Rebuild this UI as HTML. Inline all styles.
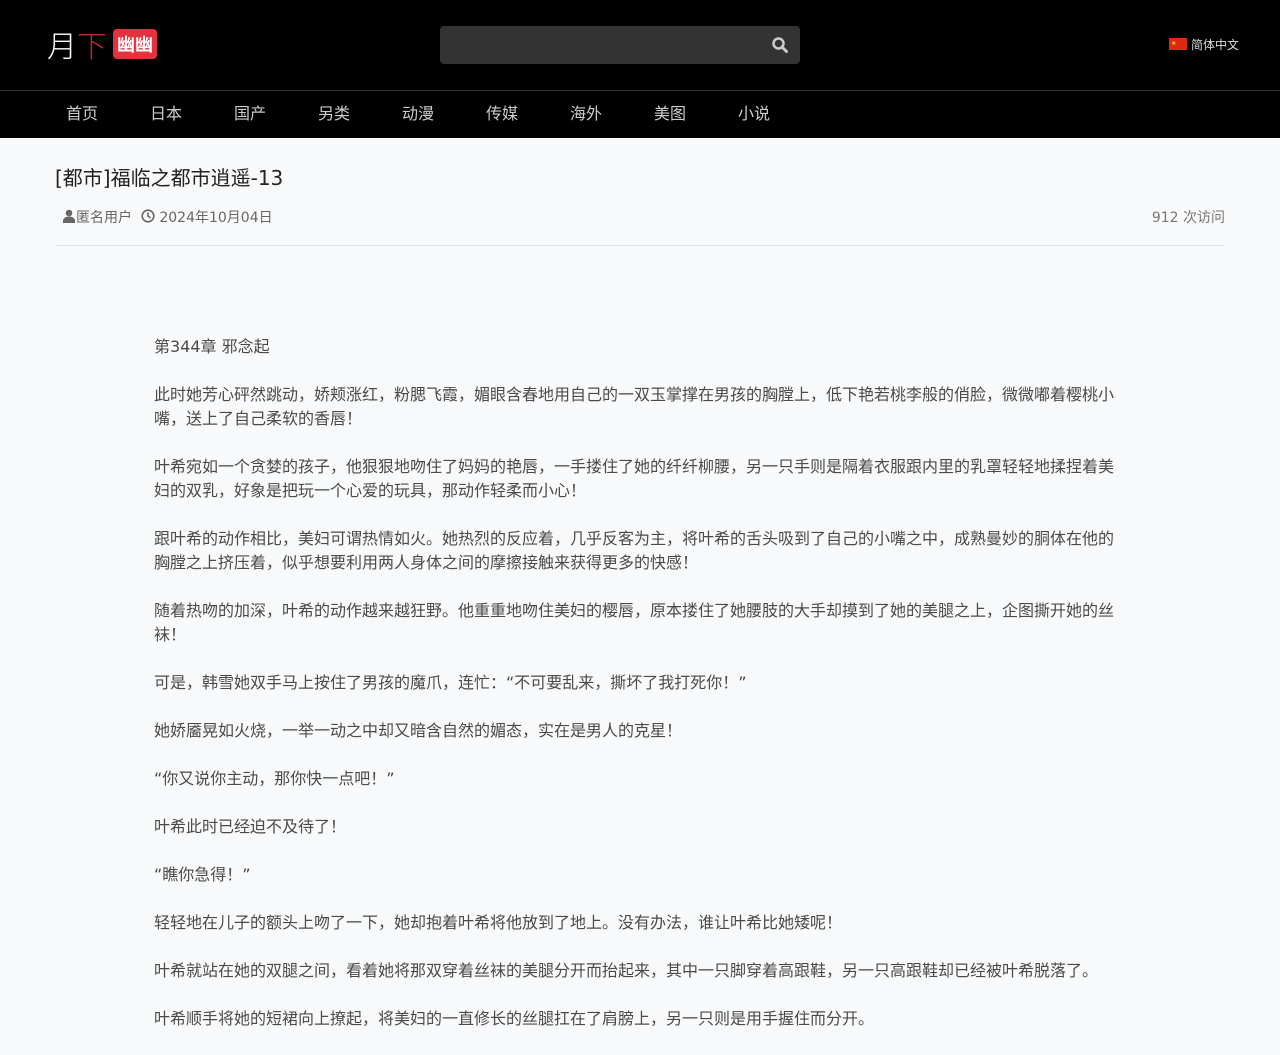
<!DOCTYPE html>
<html><head><meta charset="utf-8">
<style>
*{margin:0;padding:0;box-sizing:border-box}
html,body{background:#f8f9fa;font-family:"DejaVu Sans","Liberation Sans","WenQuanYi Zen Hei",sans-serif;width:1280px;height:1024px;overflow:hidden}
.top{background:#000;height:91px;border-bottom:1px solid #333;position:relative}
.logo{position:absolute;left:47px;top:24px;font-family:"Noto Sans CJK SC",sans-serif;font-size:30px;line-height:40px;color:#fff;font-weight:300}
.logo .r{color:#c0262d}
.logo .b{display:inline-block;background:#e5323e;color:#fff;font-size:18px;font-weight:bold;border-radius:4px;width:44px;height:30px;line-height:30px;text-align:center;vertical-align:6px;margin-left:6px}
.search{position:absolute;left:440px;top:26px;width:360px;height:38px;background:#333;border-radius:4px}
.search svg{position:absolute;right:11px;top:10px}
.lang{position:absolute;left:1169px;top:38px;font-size:12px;color:#ddd;font-family:"WenQuanYi Zen Hei",sans-serif;line-height:14px}
.flag{display:inline-block;width:18px;height:12px;background:#de2910;vertical-align:-1px;margin-right:4px;position:relative}
.flag:after{content:"★";position:absolute;left:2px;top:-1px;font-size:6px;color:#ffde00}
nav{background:#000;height:47px}
nav a{position:absolute;top:105px;font-size:16px;color:#ccc;font-family:"WenQuanYi Zen Hei",sans-serif;line-height:20px;text-decoration:none}
h1{font-size:20px;font-weight:normal;color:#222;position:absolute;left:55px;top:164px;line-height:28px}
.meta{position:absolute;left:62px;top:209px;font-size:14px;color:#666;line-height:18px}
.views{position:absolute;right:55px;top:209px;font-size:14px;color:#777;line-height:18px}
.hr{position:absolute;left:55px;right:55px;top:245px;border-top:1px solid #e2e3e5}
.content{position:absolute;left:154px;top:335px;width:966px;font-size:16px;line-height:24px;color:#4a4a4a;font-family:"DejaVu Sans","WenQuanYi Zen Hei",sans-serif}
.content p{margin-bottom:24px}
</style></head><body>
<div class="top">
<div class="logo">月<span class="r">下</span><span class="b">幽幽</span></div>
<div class="search"><svg width="18" height="18" viewBox="0 0 18 18"><circle cx="7.5" cy="7.5" r="5" fill="none" stroke="#ccc" stroke-width="2.5"/><line x1="11" y1="11" x2="15.5" y2="15.5" stroke="#ccc" stroke-width="3" stroke-linecap="round"/></svg></div>
<div class="lang"><span class="flag"></span>简体中文</div>
</div>
<nav>
<a style="left:66px">首页</a><a style="left:150px">日本</a><a style="left:234px">国产</a><a style="left:318px">另类</a><a style="left:402px">动漫</a><a style="left:486px">传媒</a><a style="left:570px">海外</a><a style="left:654px">美图</a><a style="left:738px">小说</a>
</nav>
<h1>[都市]福临之都市逍遥-13</h1>
<div class="meta"><svg width="14" height="14" viewBox="0 0 14 14" style="vertical-align:-1px"><circle cx="7" cy="4" r="3.3" fill="#666"/><path d="M1 14v-2c0-3 3-4.5 6-4.5s6 1.5 6 4.5v2z" fill="#666"/></svg>匿名用户 &nbsp;<svg width="14" height="14" viewBox="0 0 14 14" style="vertical-align:-1px"><circle cx="7" cy="7" r="5.8" fill="none" stroke="#666" stroke-width="1.6"/><path d="M7 3.5V7l2.5 2" fill="none" stroke="#666" stroke-width="1.6"/></svg> 2024年10月04日</div>
<div class="views">912 次访问</div>
<div class="hr"></div>
<div class="content">
<p>第344章 邪念起</p>
<p>此时她芳心砰然跳动，娇颊涨红，粉腮飞霞，媚眼含春地用自己的一双玉掌撑在男孩的胸膛上，低下艳若桃李般的俏脸，微微嘟着樱桃小嘴，送上了自己柔软的香唇！</p>
<p>叶希宛如一个贪婪的孩子，他狠狠地吻住了妈妈的艳唇，一手搂住了她的纤纤柳腰，另一只手则是隔着衣服跟内里的乳罩轻轻地揉捏着美妇的双乳，好象是把玩一个心爱的玩具，那动作轻柔而小心！</p>
<p>跟叶希的动作相比，美妇可谓热情如火。她热烈的反应着，几乎反客为主，将叶希的舌头吸到了自己的小嘴之中，成熟曼妙的胴体在他的胸膛之上挤压着，似乎想要利用两人身体之间的摩擦接触来获得更多的快感！</p>
<p>随着热吻的加深，叶希的动作越来越狂野。他重重地吻住美妇的樱唇，原本搂住了她腰肢的大手却摸到了她的美腿之上，企图撕开她的丝袜！</p>
<p>可是，韩雪她双手马上按住了男孩的魔爪，连忙：“不可要乱来，撕坏了我打死你！”</p>
<p>她娇靥晃如火烧，一举一动之中却又暗含自然的媚态，实在是男人的克星！</p>
<p>“你又说你主动，那你快一点吧！”</p>
<p>叶希此时已经迫不及待了！</p>
<p>“瞧你急得！”</p>
<p>轻轻地在儿子的额头上吻了一下，她却抱着叶希将他放到了地上。没有办法，谁让叶希比她矮呢！</p>
<p>叶希就站在她的双腿之间，看着她将那双穿着丝袜的美腿分开而抬起来，其中一只脚穿着高跟鞋，另一只高跟鞋却已经被叶希脱落了。</p>
<p>叶希顺手将她的短裙向上撩起，将美妇的一直修长的丝腿扛在了肩膀上，另一只则是用手握住而分开。</p>
</div>
</body></html>
